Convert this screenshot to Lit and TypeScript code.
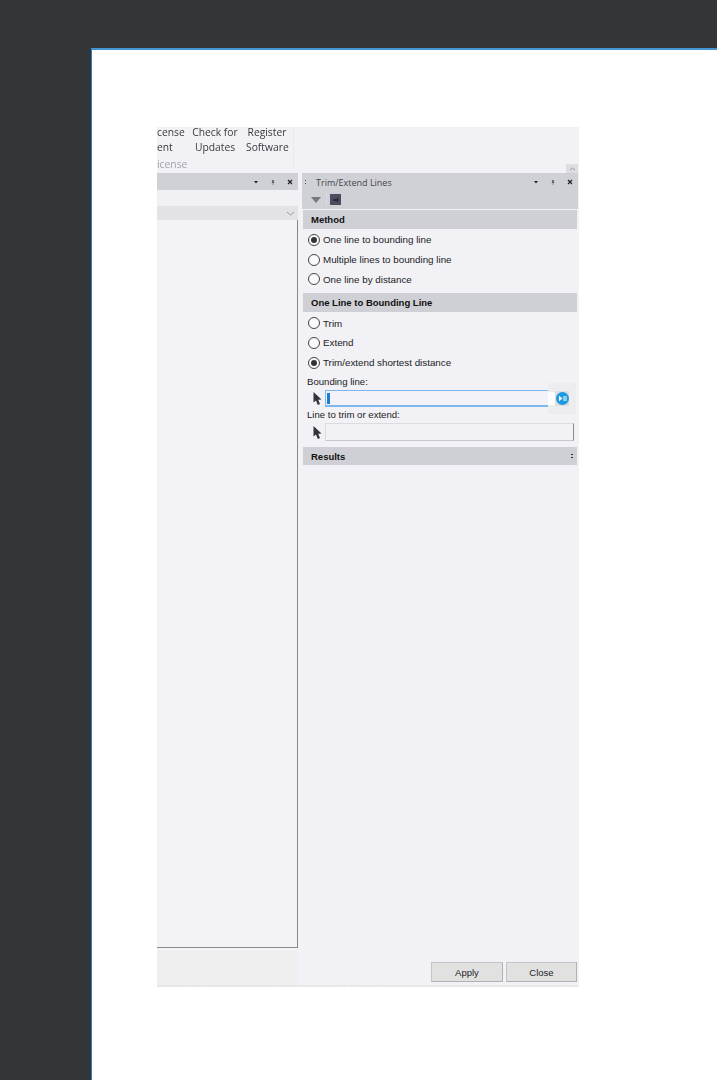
import { LitElement, html, css } from "lit";
import { customElement } from "lit/decorators.js";

const cursor = html`<svg class="cursor" width="11" height="15" viewBox="0 0 11 15"><path d="M1.5 1 L1.5 11.5 L4 9.5 L5.8 14 L8 13 L6.2 8.8 L9.5 8.5 Z" fill="#33343a"/></svg>`;

const winBtns = html`<div class="winbtns">
  <svg width="6" height="6" viewBox="0 0 6 6"><path d="M1 2h4L3 4.5z" fill="#222"/></svg>
  <svg width="6" height="6" viewBox="0 0 6 6"><path d="M2.2 1h1.6v2.4h.7v.7H3.3V6h-.6V4.1H1.5v-.7h.7z" fill="#55555a"/></svg>
  <svg width="6" height="6" viewBox="0 0 6 6"><path d="M1 1l4 4M5 1L1 5" stroke="#222" stroke-width="1.2"/></svg>
</div>`;

const ticks = [30, 16, 75, 24, 37, 9, 11, 19, 184, 17];

@customElement("app-root")
export class AppRoot extends LitElement {
  static styles = css`
    :host { display: block; width: 717px; height: 1080px; background: #333538; padding: 48px 0 0 91px; box-sizing: border-box; overflow: hidden; }
    .page { height: 1032px; background: #fff; border-top: 2px solid #4294d2; border-left: 1px solid #2a7cbd; padding: 77px 138px 0 65px; box-sizing: border-box; }
    .shot { width: 422px; height: 860px; background: #f1f1f6; display: flex; flex-direction: column; filter: blur(0.35px); color: #222; font-family: "Liberation Sans", Arial, sans-serif; }

    .ribbon { height: 46px; flex: none; display: flex; font-family: "Open Sans", sans-serif; font-size: 10.3px; color: #3a3a3e; position: relative; }
    .group { width: 137px; flex: none; position: relative; height: 41px; display: flex; border-right: 1px solid #e9e9ed; box-sizing: border-box; }
    .clip { width: 35px; flex: none; }
    .ln { display: block; height: 10px; line-height: 10px; white-space: nowrap; }
    .ln + .ln { margin-top: 5px; }
    .cmd { text-align: center; }
    .check { width: 46px; flex: none; }
    .reg { width: 42px; margin-left: 8px; flex: none; }
    .glabel { position: absolute; left: 0; top: 29.5px; line-height: 15px; color: #a2a2a8; white-space: nowrap; }
    .collapse { position: absolute; right: 1px; bottom: 0; width: 12px; height: 9px; background: #dddde2; display: flex; justify-content: center; align-items: center; }

    .body { flex: 1; display: flex; min-height: 0; }
    .left { width: 141px; flex: none; display: flex; flex-direction: column; }
    .sash { width: 4px; flex: none; }
    .right { flex: 1; display: flex; flex-direction: column; padding-right: 1px; }

    .phead { height: 17px; flex: none; background: #d0d1d6; display: flex; align-items: center; font-family: "Open Sans", sans-serif; font-size: 9px; color: #45454a; }
    .phead .grip { width: 3px; height: 6px; margin: 0 9px 0 2px; background-image: radial-gradient(#555 0.7px, transparent 0.8px); background-size: 3px 3px; flex: none; }
    .phead .title { flex: 1; white-space: nowrap; padding-top: 1px; }
    .winbtns { display: flex; gap: 11px; margin-left: auto; margin-right: 5px; align-items: center; }

    .ltool { height: 16px; flex: none; background: #f1f1f5; }
    .combo { height: 14px; flex: none; background: #e3e3e5; display: flex; align-items: center; justify-content: flex-end; padding-right: 3px; }
    .list { flex: 1; background: #f3f3f6; border-right: 1px solid #85858a; border-bottom: 1px solid #8a8a8e; }
    .lfoot { height: 37px; flex: none; background: #efeff0; margin-right: 1px; border-top: 2px solid #f3f3f5; box-sizing: border-box; }

    .rtool { height: 19px; flex: none; background: #d0d1d6; display: flex; align-items: center; padding-left: 9px; margin-bottom: 1px; }
    .sep { width: 1px; height: 13px; background: #dcdce0; margin: 0 3px 0 5px; }

    .sect { height: 19px; flex: none; background: #cfd0d5; font-size: 9.5px; font-weight: bold; color: #111; display: flex; align-items: center; padding: 0 4px 0 8px; margin: 0 1px; justify-content: space-between; }
    .dots { width: 2px; height: 5px; background: repeating-linear-gradient(#333 0 1.5px, transparent 1.5px 3px); }
    .opts { display: flex; flex-direction: column; padding: 1px 0 0 6px; }
    .opt { height: 19.75px; display: flex; align-items: center; gap: 3px; font-size: 9.8px; color: #222; white-space: nowrap; }
    .radio { width: 10px; height: 10px; border-radius: 50%; background: #fafafc; border: 1px solid #444; flex: none; display: flex; align-items: center; justify-content: center; }
    .radio.on::after { content: ""; width: 6px; height: 6px; border-radius: 50%; background: #333; }
    .mb { margin-bottom: 4px; }

    .lbl { font-size: 9.6px; line-height: 11px; margin-left: 5px; color: #222; white-space: nowrap; }
    .l1 { margin-top: 3px; }
    .l2 { margin-top: 2px; }
    .frow { display: flex; align-items: center; margin-left: 5px; }
    .fr1 { margin-top: 3.5px; height: 17px; }
    .fr2 { margin-top: 3px; }
    .cursor { flex: none; margin: 0 2px 0 5px; }
    .f1 { width: 223px; height: 17px; box-sizing: border-box; background: #f2f2f8; border: 1px solid #7cb8ea; border-bottom-width: 2px; border-right: none; display: flex; align-items: center; padding-left: 1px; flex: none; }
    .caret { width: 3px; height: 11px; background: #1a7fd4; }
    .wrap { width: 28px; height: 31px; background: #ededf0; display: flex; align-items: center; flex: none; }
    .pick { width: 7px; height: 13px; background: #fff; flex: none; }
    .btn-in { width: 14px; height: 15px; background: #ddd; display: flex; align-items: center; justify-content: center; }
    .f2 { width: 249px; height: 18px; box-sizing: border-box; background: #f2f2f6; border: 1px solid #dcdce0; border-right: 1px solid #8a8a90; border-bottom-color: #c8c8cc; flex: none; }
    .s3 { margin-top: 6px; height: 18px; }
    .spacer { flex: 1; }
    .foot { display: flex; justify-content: flex-end; gap: 3px; padding: 0 1px 3px 0; }
    .pb { width: 72px; height: 20px; box-sizing: border-box; background: #e1e1e2; border: 1px solid #c4c4c6; border-bottom-color: #b0b0b2; border-right-color: #b0b0b2; font-size: 9.5px; color: #222; display: flex; align-items: center; justify-content: center; }
    .pb.close { width: 71px; }
    .strip { height: 2px; flex: none; display: flex; background: #e6e8e8; }
    .tick { height: 2px; box-sizing: border-box; border-right: 1px solid #f2f2f4; flex: none; }
  `;

  private opt(label: string, on = false) {
    return html`<div class="opt"><span class="radio ${on ? "on" : ""}"></span>${label}</div>`;
  }

  render() {
    return html`<div class="page"><div class="shot">
      <div class="ribbon">
        <div class="group">
          <div class="clip"><span class="ln">cense</span><span class="ln">ent</span></div>
          <div class="cmd check"><span class="ln">Check for</span><span class="ln">Updates</span></div>
          <div class="cmd reg"><span class="ln">Register</span><span class="ln">Software</span></div>
          <div class="glabel">icense</div>
        </div>
        <div class="collapse"><svg width="7" height="4" viewBox="0 0 7 4"><path d="M1 3l2.5-2L6 3" fill="none" stroke="#888" stroke-width=".8"/></svg></div>
      </div>
      <div class="body">
        <div class="left">
          <div class="phead">${winBtns}</div>
          <div class="ltool"></div>
          <div class="combo"><svg width="9" height="5" viewBox="0 0 9 5"><path d="M1 1l3.5 3L8 1" fill="none" stroke="#8a8a8e" stroke-width=".8"/></svg></div>
          <div class="list"></div>
          <div class="lfoot"></div>
        </div>
        <div class="sash"></div>
        <div class="right">
          <div class="phead"><span class="grip"></span><span class="title">Trim/Extend Lines</span>${winBtns}</div>
          <div class="rtool">
            <svg width="10" height="6" viewBox="0 0 10 6"><path d="M0 0h10L5 6z" fill="#77777c"/></svg>
            <span class="sep"></span>
            <svg width="11" height="11" viewBox="0 0 11 11"><rect width="11" height="11" fill="#4c4c60"/><path d="M3 5h4V3l2 3-2 3V7H3z" fill="#2c2c38"/></svg>
          </div>
          <div class="sect">Method</div>
          <div class="opts mb">
            ${this.opt("One line to bounding line", true)}
            ${this.opt("Multiple lines to bounding line")}
            ${this.opt("One line by distance")}
          </div>
          <div class="sect">One Line to Bounding Line</div>
          <div class="opts">
            ${this.opt("Trim")}
            ${this.opt("Extend")}
            ${this.opt("Trim/extend shortest distance", true)}
          </div>
          <div class="lbl l1">Bounding line:</div>
          <div class="frow fr1">${cursor}<div class="f1"><span class="caret"></span></div><div class="wrap"><span class="pick"></span><div class="btn-in">
            <svg width="13" height="13" viewBox="0 0 13 13"><circle cx="6.5" cy="6.5" r="6.5" fill="#1a9ae0"/><path d="M3 3.8L6.5 6.5 3 9.2zM7.5 4h1v5h-1zM9.5 4h1v5h-1z" fill="#fff"/></svg>
          </div></div></div>
          <div class="lbl l2">Line to trim or extend:</div>
          <div class="frow fr2">${cursor}<div class="f2"></div></div>
          <div class="sect s3">Results<span class="dots"></span></div>
          <div class="spacer"></div>
          <div class="foot">
            <div class="pb">Apply</div>
            <div class="pb close">Close</div>
          </div>
        </div>
      </div>
      <div class="strip">${ticks.map((w) => html`<span class="tick" style="width:${w}px"></span>`)}</div>
    </div></div>`;
  }
}
